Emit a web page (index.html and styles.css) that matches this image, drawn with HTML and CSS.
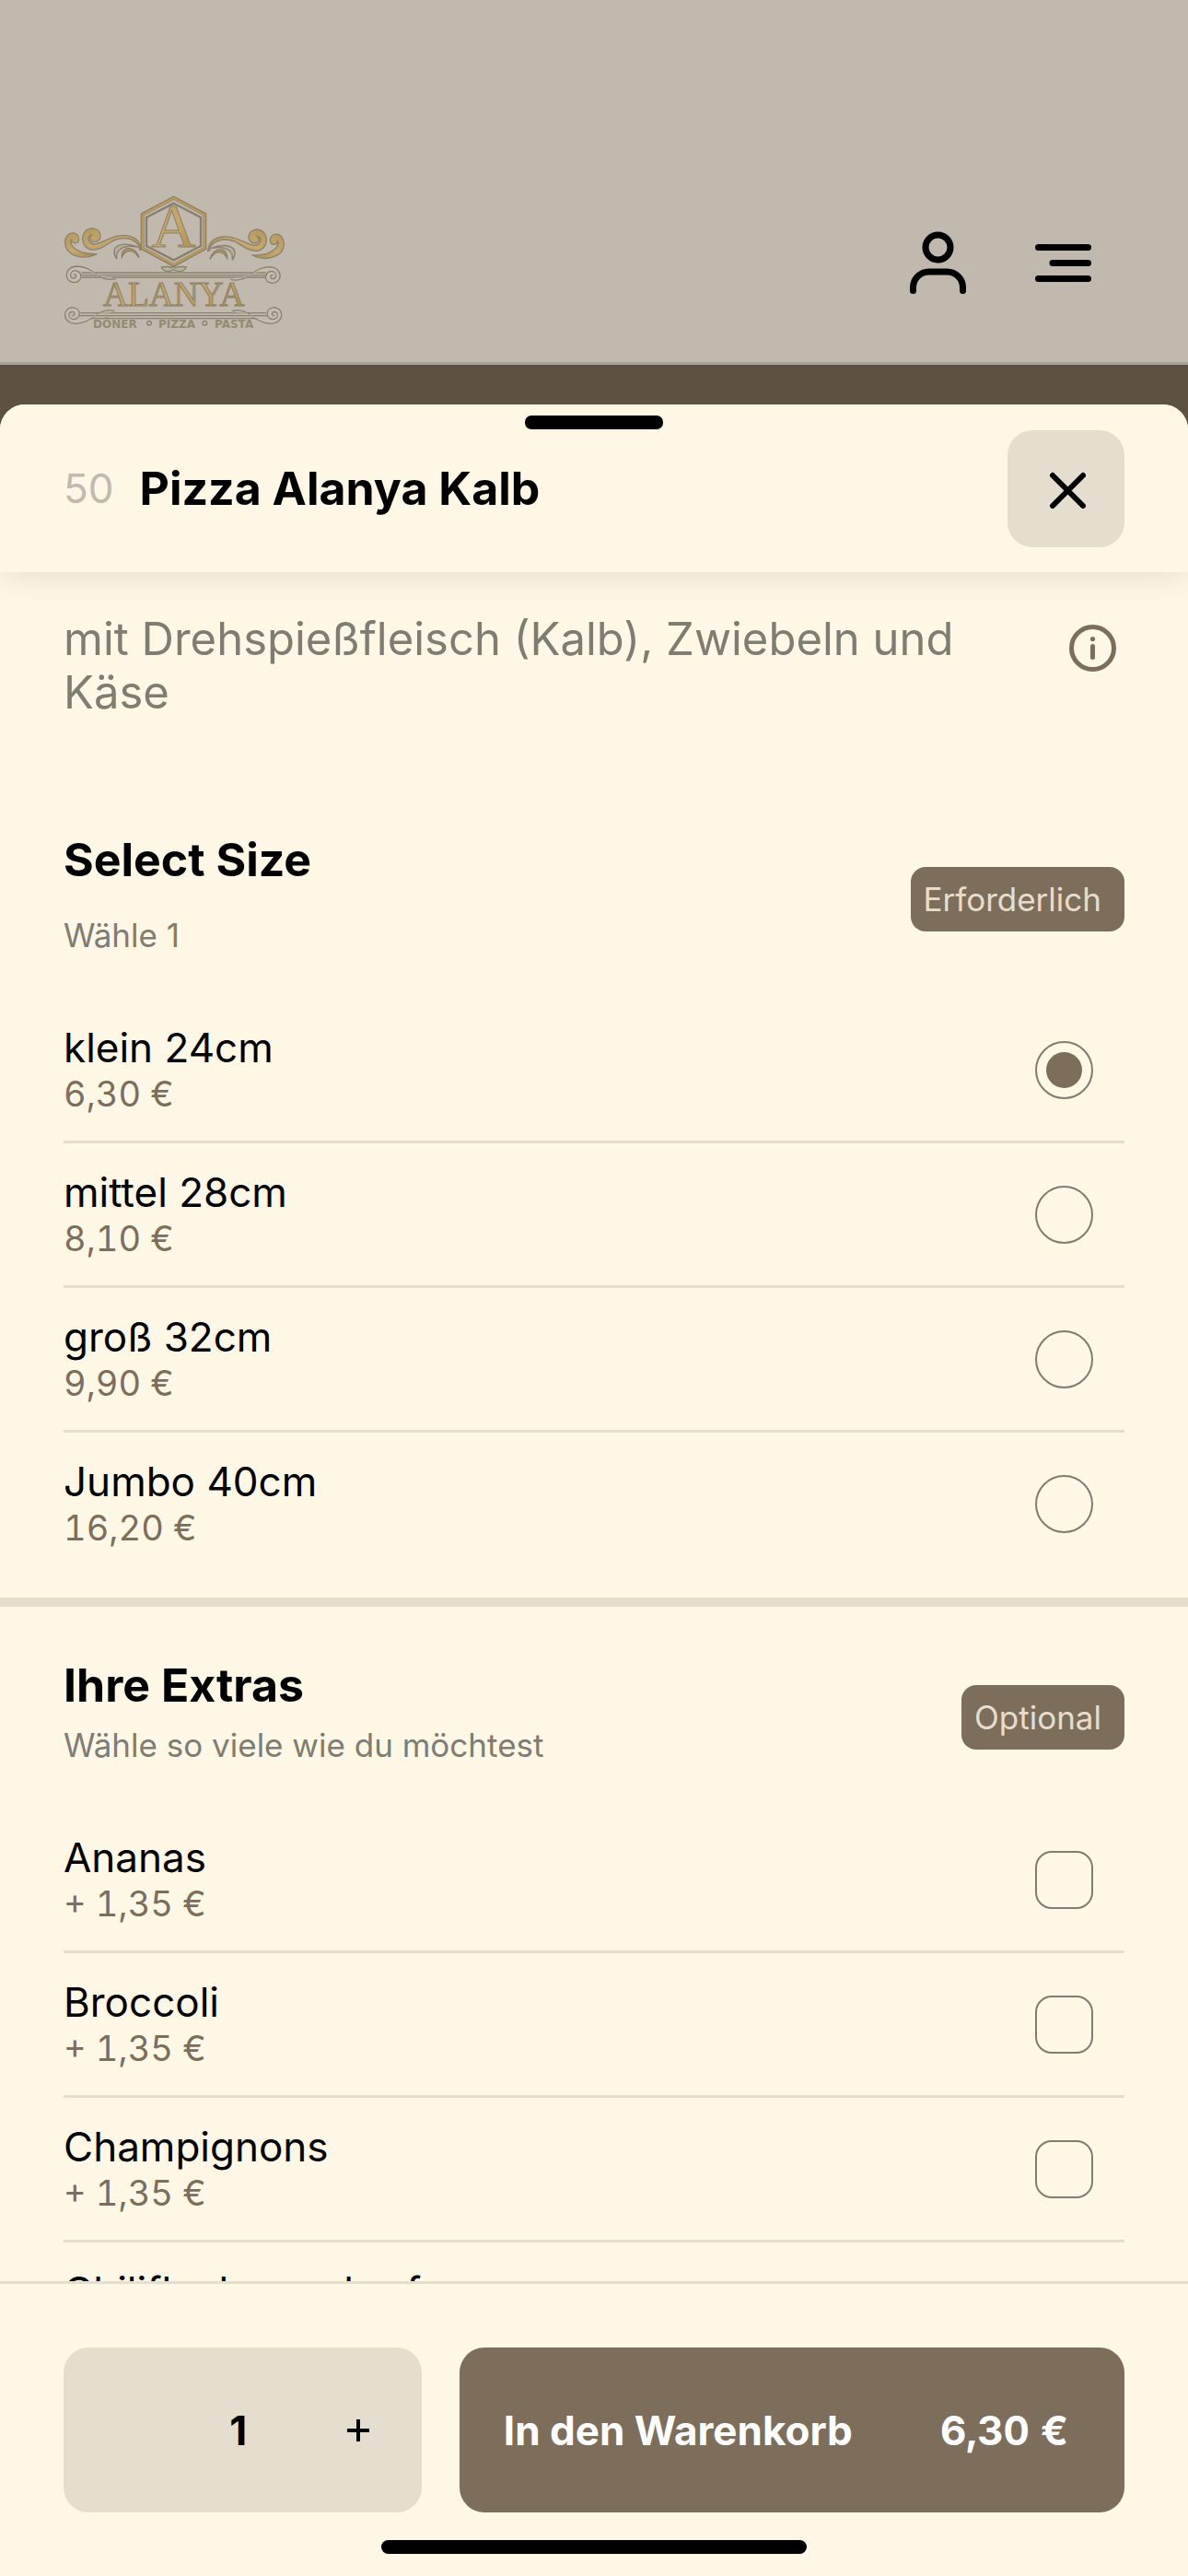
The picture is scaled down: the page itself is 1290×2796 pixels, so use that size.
FILE: index.html
```html
<!DOCTYPE html>
<html lang="de">
<head>
<meta charset="utf-8">
<meta name="viewport" content="width=device-width, initial-scale=1">
<title>Pizza Alanya Kalb</title>
<link rel="stylesheet" href="styles.css">
</head>
<body>
<div class="app">
  <header class="site-header">
    <svg class="logo" viewBox="57 36 720 438" role="img" aria-label="Alanya Döner Pizza Pasta">
      <defs>
        <linearGradient id="gold" x1="0" y1="0" x2="1" y2="1">
          <stop offset="0" stop-color="#b4975a"/>
          <stop offset="0.5" stop-color="#c6a86c"/>
          <stop offset="1" stop-color="#a98a45"/>
        </linearGradient>
        <g id="scroll">
          <path d="M166 227 C120 250 62 232 62 190 C62 150 108 150 107 180 C105 197 80 195 83 178 C74 196 92 212 118 222 Q140 228 166 227Z" fill="url(#gold)" stroke="#8b8370" stroke-width="4"/>
          <path d="M305 213 C300 180 262 168 222 182 C192 200 172 216 148 213 C108 205 110 146 150 143 C186 146 184 188 156 188 C138 184 140 166 152 164 C128 166 138 196 160 195 C200 186 215 164 262 167 C296 172 308 190 310 213Z" fill="url(#gold)" stroke="#8b8370" stroke-width="4"/>
          <path d="M230 243 C205 205 240 182 300 205 C262 196 226 206 230 243Z" fill="#b7ae9c" stroke="#89826f" stroke-width="4"/>
          <path d="M247 237 C244 198 295 200 303 240 C286 212 262 208 247 237Z" fill="#b0925a" stroke="#89826f" stroke-width="4"/>
        </g>
        <g id="curl" fill="none" stroke="#89826f" stroke-width="4">
          <path d="M228 308 C170 322 160 268 100 267 C58 268 56 318 92 320 C124 316 118 280 92 281 C74 286 76 306 92 306 C102 302 98 292 90 294"/>
          <path d="M216 304 C168 308 158 278 104 274 C72 276 66 312 92 313 C110 310 108 290 94 288" stroke="#d0c8b8" stroke-width="2"/>
        </g>
      </defs>
      <use href="#scroll"/>
      <use href="#scroll" transform="matrix(-1 0 0 1 837 4)"/>
      <path d="M416 44 L517 98 V209 L416 264 L314 209 V98Z" fill="none" stroke="#89826f" stroke-width="12"/>
      <path d="M416 45 L516 99 V208 L416 262 L315 208 V99Z" fill="none" stroke="#bd9a55" stroke-width="6"/>
      <path d="M416 62 L504 108 V201 L416 247 L327 201 V108Z" fill="none" stroke="#85806f" stroke-width="7"/>
      <text class="logo-initial" x="416" y="205" text-anchor="middle">A</text>
      <path d="M376 270 Q396 266 412 272 L416 264 L420 272 Q440 266 457 270 Q446 290 422 281 L416 278 L410 281 Q386 290 376 270Z" fill="#b9b09f" stroke="#89826f" stroke-width="4"/>
      <path d="M116 288 H716 M112 296 H720 M116 303 H716" stroke="#89826f" stroke-width="4"/>
      <use href="#curl"/>
      <use href="#curl" transform="matrix(-1 0 0 1 829 2)"/>
      <text class="logo-name" x="416" y="397" text-anchor="middle">ALANYA</text>
      <path d="M112 419 H716 M108 428 H720 M140 437 H690" stroke="#89826f" stroke-width="4"/>
      <use href="#curl" transform="matrix(1 0 0 -1 -5 721)"/>
      <use href="#curl" transform="matrix(-1 0 0 -1 834 721)"/>
      <text class="logo-tag" x="153" y="467">DÖNER</text>
      <circle cx="336" cy="452" r="7" fill="none" stroke="#8a7f66" stroke-width="4"/>
      <text class="logo-tag" x="366" y="467">PIZZA</text>
      <circle cx="517" cy="452" r="7" fill="none" stroke="#8a7f66" stroke-width="4"/>
      <text class="logo-tag" x="549" y="467">PASTA</text>
    </svg>
    <nav class="site-nav">
      <button class="icon-button" type="button" aria-label="Konto">
        <svg width="61" height="68" viewBox="0 0 61 68" fill="none" stroke="currentColor" stroke-width="7" stroke-linecap="round">
          <circle cx="30.500" cy="17.500" r="13.500"/>
          <path d="M3.500 64.500 V61 A17 17 0 0 1 20.500 44 H40.500 A17 17 0 0 1 57.500 61 V64.500"/>
        </svg>
      </button>
      <button class="icon-button" type="button" aria-label="Menü">
        <svg width="61" height="41" viewBox="0 0 61 41" fill="none" stroke="currentColor" stroke-width="7" stroke-linecap="round">
          <path d="M3.500 3.500 H57.500 M19 20.500 H57.500 M3.500 37.500 H57.500"/>
        </svg>
      </button>
    </nav>
  </header>

  <main class="sheet">
    <div class="sheet-header">
      <span class="grabber"></span>
      <span class="item-number">50</span>
      <h1 class="item-title">Pizza Alanya Kalb</h1>
      <button class="close" type="button" aria-label="Schließen">
        <svg width="43" height="43" viewBox="0 0 43 43" fill="none" stroke="currentColor" stroke-width="6" stroke-linecap="round">
          <path d="M7 7 L40 40 M40 7 L7 40"/>
        </svg>
      </button>
    </div>

    <div class="sheet-body">
      <div class="description">
        <p class="description-text">mit Drehspießfleisch (Kalb), Zwiebeln und Käse</p>
        <button class="info" type="button" aria-label="Informationen">
          <svg width="51" height="51" viewBox="0 0 51 51" fill="none" stroke="currentColor" stroke-width="5" stroke-linecap="round">
            <circle cx="25.500" cy="25.500" r="23"/>
            <path d="M25.500 23.500 V35.500"/>
            <circle cx="25.500" cy="15.500" r="2.600" fill="currentColor" stroke="none"/>
          </svg>
        </button>
      </div>

      <section class="group">
        <div class="group-head">
          <div class="group-text group-text-wide">
            <h2 class="group-title">Select Size</h2>
            <p class="group-hint">Wähle 1</p>
          </div>
          <span class="badge">Erforderlich</span>
        </div>
        <label class="option"><span class="option-text"><span class="option-name">klein 24cm</span><span class="option-price">6,30 €</span></span><input class="choice choice-radio" type="radio" name="size" checked></label>
        <label class="option"><span class="option-text"><span class="option-name">mittel 28cm</span><span class="option-price">8,10 €</span></span><input class="choice choice-radio" type="radio" name="size"></label>
        <label class="option"><span class="option-text"><span class="option-name">groß 32cm</span><span class="option-price">9,90 €</span></span><input class="choice choice-radio" type="radio" name="size"></label>
        <label class="option"><span class="option-text"><span class="option-name">Jumbo 40cm</span><span class="option-price">16,20 €</span></span><input class="choice choice-radio" type="radio" name="size"></label>
      </section>

      <section class="group">
        <div class="group-head">
          <div class="group-text">
            <h2 class="group-title">Ihre Extras</h2>
            <p class="group-hint">Wähle so viele wie du möchtest</p>
          </div>
          <span class="badge">Optional</span>
        </div>
        <label class="option"><span class="option-text"><span class="option-name">Ananas</span><span class="option-price">+ 1,35 €</span></span><input class="choice choice-box" type="checkbox"></label>
        <label class="option"><span class="option-text"><span class="option-name">Broccoli</span><span class="option-price">+ 1,35 €</span></span><input class="choice choice-box" type="checkbox"></label>
        <label class="option"><span class="option-text"><span class="option-name">Champignons</span><span class="option-price">+ 1,35 €</span></span><input class="choice choice-box" type="checkbox"></label>
        <label class="option"><span class="option-text"><span class="option-name">Chiliflocken scharf</span><span class="option-price">+ 1,35 €</span></span><input class="choice choice-box" type="checkbox"></label>
      </section>
    </div>

    <footer class="sheet-footer">
      <div class="order">
        <div class="stepper">
          <output class="quantity">1</output>
          <button class="plus" type="button" aria-label="Mehr">
            <svg width="24" height="24" viewBox="0 0 24 24" stroke="currentColor" stroke-width="4"><path d="M0 12 H24 M12 0 V24"/></svg>
          </button>
        </div>
        <button class="add" type="button"><span>In den Warenkorb</span><span class="total">6,30 €</span></button>
      </div>
      <div class="home-bar"></div>
    </footer>
  </main>
</div>
</body>
</html>
```
FILE: styles.css
```css
* {
  box-sizing: border-box;
}

:root {
  --cream: #fff7e5;
  --sand: #e5dece;
  --brown: #7d6e5c;
  --grey: #7f7c72;
  --side: 69px;
}

body {
  margin: 0;
  background: #5d5143;
  color: #000;
  font-family: Inter, "Noto Sans", sans-serif;
}

h1, h2, p {
  margin: 0;
}

button {
  margin: 0;
  padding: 0;
  border: 0;
  background: none;
  color: inherit;
  font: inherit;
}

svg {
  display: block;
}

.app {
  display: flex;
  flex-direction: column;
  height: 100vh;
}

/* Page header behind the sheet */
.site-header {
  display: flex;
  align-items: center;
  justify-content: space-between;
  padding: 212px 105px 35px var(--side);
  border-bottom: 3px solid #a8a396;
  background: #c1b9ad;
}

.logo {
  width: 240px;
  height: 146px;
}

.logo-initial,
.logo-name {
  font-family: "Liberation Serif", serif;
  fill: url(#gold);
  stroke: #8a8169;
  stroke-width: 3;
}

.logo-initial {
  font-size: 200px;
}

.logo-name {
  font-size: 112px;
}

.logo-tag {
  font-family: "DejaVu Sans", sans-serif;
  font-size: 36px;
  font-weight: bold;
  fill: #948a72;
}

.site-nav {
  display: flex;
  align-items: center;
  gap: 75px;
}

/* Sheet */
.sheet {
  display: flex;
  flex: 1;
  flex-direction: column;
  min-height: 0;
  margin-top: 43px;
  overflow: hidden;
  border-radius: 27px 27px 0 0;
  background: var(--cream);
}

.sheet-header {
  position: relative;
  z-index: 1;
  display: flex;
  flex: none;
  align-items: center;
  gap: 28px;
  padding: 28px var(--side) 27px;
  background: var(--cream);
  box-shadow: 0 0 36px rgba(0, 0, 0, 0.12);
}

.grabber {
  position: absolute;
  top: 12px;
  left: 50%;
  width: 150px;
  height: 15px;
  margin-left: -75px;
  border-radius: 7px;
  background: #000;
}

.item-number {
  padding-bottom: 2px;
  color: #c1b9ad;
  font-size: 44px;
  line-height: 60px;
}

.item-title,
.group-title {
  font-size: 50px;
  font-weight: 700;
  line-height: 60px;
}

.item-title {
  padding-bottom: 2px;
}

.close {
  display: grid;
  place-items: center;
  width: 127px;
  height: 127px;
  margin-left: auto;
  border-radius: 27px;
  background: var(--sand);
}

.sheet-body {
  flex: 1;
  min-height: 0;
  overflow-y: auto;
  scrollbar-width: none;
}

.description {
  display: flex;
  align-items: flex-start;
  justify-content: space-between;
  gap: 60px;
  padding: 44px var(--side) 67px;
}

.description-text {
  color: var(--grey);
  font-size: 49px;
  line-height: 58px;
}

.info {
  padding: 13px 9px;
  color: var(--brown);
}

.group {
  padding: 55px var(--side) 25px;
}

.group + .group {
  border-top: 10px solid var(--sand);
}

.group-head {
  display: flex;
  align-items: center;
  justify-content: space-between;
  padding-bottom: 35px;
}

.group-text {
  display: flex;
  flex-direction: column;
  gap: 13px;
  padding-bottom: 12px;
}

.group-text-wide {
  gap: 30px;
}

.group-hint {
  color: var(--grey);
  font-size: 35px;
  line-height: 44px;
}

.badge {
  padding: 0 25px 0 14px;
  border-radius: 16px;
  background: var(--brown);
  color: var(--sand);
  font-size: 35px;
  line-height: 70px;
}

.option {
  display: flex;
  align-items: center;
  justify-content: space-between;
  padding: 27px 34px 27px 0;
}

.option + .option {
  border-top: 3px solid var(--sand);
}

.option-text {
  display: flex;
  flex-direction: column;
}

.option-name {
  font-size: 44px;
  line-height: 52px;
}

.option-price,
.total {
  font-variant-numeric: tabular-nums;
}

.option-price {
  color: var(--brown);
  font-size: 38px;
  line-height: 48px;
}

.choice {
  display: grid;
  place-items: center;
  width: 63px;
  height: 63px;
  margin: 0;
  border: 2px solid var(--grey);
  appearance: none;
}

.choice-radio {
  border-radius: 50%;
}

.choice-radio:checked::before {
  width: 39px;
  height: 39px;
  border-radius: 50%;
  background: var(--brown);
  content: "";
}

.choice-box {
  border-radius: 18px;
}

/* Order bar */
.sheet-footer {
  flex: none;
  padding: 69px var(--side) 24px;
  border-top: 3px solid var(--sand);
  background: var(--cream);
}

.order {
  display: grid;
  grid-template-columns: 7fr 13fr;
  gap: 41px;
  font-size: 44px;
  font-weight: 700;
}

.stepper {
  display: grid;
  grid-template-columns: 124px 137px;
  justify-content: end;
  align-items: stretch;
  border-radius: 27px;
  background: var(--sand);
}

.quantity {
  align-self: center;
  text-align: center;
}

.plus {
  display: grid;
  place-items: center;
}

.add {
  display: flex;
  align-items: center;
  justify-content: space-between;
  height: 179px;
  padding: 0 61px 0 48px;
  border-radius: 27px;
  background: var(--brown);
  color: #fff;
}

.home-bar {
  width: 462px;
  height: 15px;
  margin: 30px auto 0;
  border-radius: 8px;
  background: #000;
}
```
